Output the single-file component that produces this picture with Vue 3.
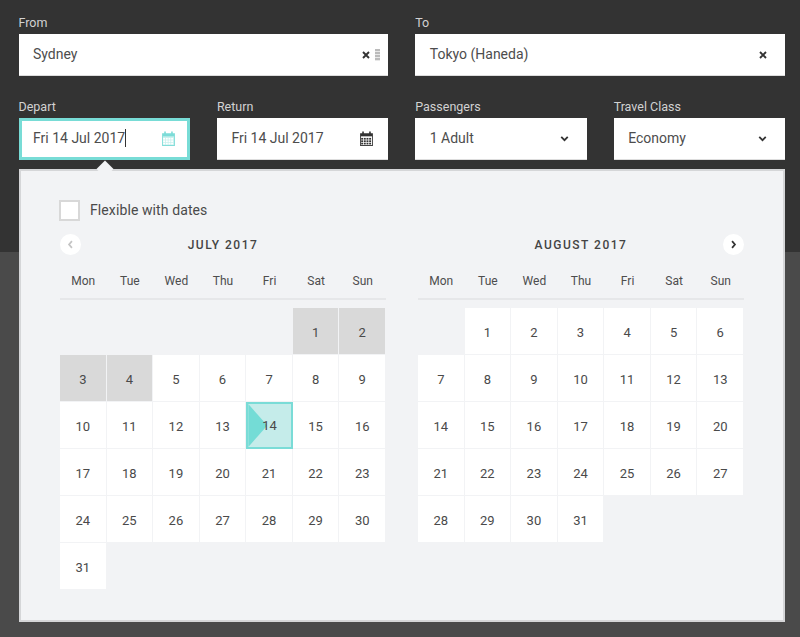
<script setup>
const weekdays = ['Mon', 'Tue', 'Wed', 'Thu', 'Fri', 'Sat', 'Sun']
const range = (n) => Array.from({ length: n }, (_, i) => i + 1)
const months = [
  { title: 'JULY 2017', blanks: 5, days: range(31), disabled: [1, 2, 3, 4], selected: 14 },
  { title: 'AUGUST 2017', blanks: 1, days: range(31), disabled: [], selected: 0 }
]
const calCells = []
for (const y of [6.5, 8.75, 11]) {
  for (const x of [2, 4.5, 7, 9.5]) calCells.push({ x, y })
}
</script>

<template>
  <div class="page">
    <header class="search">
      <div class="grid-two">
        <div class="field">
          <label>From</label>
          <div class="input grip-input">
            <span>Sydney</span>
            <svg class="x" viewBox="0 0 10 10"><path d="M2.500 2.500l5 5M7.500 2.500l-5 5" /></svg>
            <span class="grip"></span>
          </div>
        </div>
        <div class="field">
          <label>To</label>
          <div class="input">
            <span>Tokyo (Haneda)</span>
            <svg class="x x-solo" viewBox="0 0 10 10"><path d="M2.500 2.500l5 5M7.500 2.500l-5 5" /></svg>
          </div>
        </div>
      </div>
      <div class="grid-two second">
        <div class="grid-two">
          <div class="field">
            <label>Depart</label>
            <div class="input focus">
              <span>Fri 14 Jul 2017<i class="caret"></i></span>
              <svg class="cal teal" viewBox="0 0 14 15">
                <path class="fill" d="M1 2h2V.5h1.500V2h5V.5H11V2h2v12H1z" />
                <rect x="1.800" y="5" width="10.400" height="8.200" fill="#c8f0ee" />
                <rect v-for="c in calCells" :key="c.x + '-' + c.y" :x="c.x" :y="c.y" width="1.800" height="1.600" fill="#fff" />
              </svg>
            </div>
          </div>
          <div class="field">
            <label>Return</label>
            <div class="input">
              <span>Fri 14 Jul 2017</span>
              <svg class="cal" viewBox="0 0 14 15">
                <path class="fill" d="M1 2h2V.5h1.500V2h5V.5H11V2h2v12H1z" />
                <rect x="1.800" y="5" width="10.400" height="8.200" fill="#fff" />
                <rect v-for="c in calCells" :key="c.x + '-' + c.y" :x="c.x" :y="c.y" width="1.800" height="1.600" fill="#333" />
              </svg>
            </div>
          </div>
        </div>
        <div class="grid-two">
          <div class="field">
            <label>Passengers</label>
            <div class="input">
              <span>1 Adult</span>
              <svg class="chev" viewBox="0 0 10 10"><path d="M2.500 3.800L5 6.300l2.500-2.500" /></svg>
            </div>
          </div>
          <div class="field">
            <label>Travel Class</label>
            <div class="input">
              <span>Economy</span>
              <svg class="chev" viewBox="0 0 10 10"><path d="M2.500 3.800L5 6.300l2.500-2.500" /></svg>
            </div>
          </div>
        </div>
      </div>
    </header>

    <section class="popup">
      <span class="notch"></span>
      <div class="flex-row">
        <span class="checkbox"></span>
        <span>Flexible with dates</span>
      </div>
      <div class="months">
        <div v-for="(m, mi) in months" :key="m.title" class="month">
          <div class="month-head">
            <span v-if="mi === 0" class="nav">
              <svg viewBox="0 0 10 10" class="dim"><path d="M6.300 2L3.700 5l2.600 3" /></svg>
            </span>
            <span class="title">{{ m.title }}</span>
            <span v-if="mi === 1" class="nav nav-right">
              <svg viewBox="0 0 10 10"><path d="M3.700 2l2.600 3-2.600 3" /></svg>
            </span>
          </div>
          <div class="weekdays">
            <span v-for="w in weekdays" :key="w">{{ w }}</span>
          </div>
          <div class="days">
            <span v-for="b in m.blanks" :key="'b' + b" class="blank"></span>
            <span
              v-for="d in m.days"
              :key="d"
              class="day"
              :class="{ off: m.disabled.includes(d), sel: m.selected === d }"
            >{{ d }}</span>
          </div>
        </div>
      </div>
    </section>
  </div>
</template>

<style>
html, body { margin: 0; background: #4a4a4a; }
</style>

<style scoped>
.page {
  position: relative;
  width: 800px;
  height: 637px;
  overflow: hidden;
  background: #4a4a4a;
  font-family: Roboto, "Liberation Sans", sans-serif;
  color: #4a4a4a;
}
.search {
  height: 252px;
  box-sizing: border-box;
  background: #333;
  padding: 14px 15px 0 18.500px;
}
.grid-two {
  display: grid;
  grid-template-columns: 1fr 1fr;
  gap: 27px;
}
.second { margin-top: 22px; }
.field label {
  display: block;
  height: 20px;
  line-height: 17px;
  font-size: 12.500px;
  color: #d2d2d2;
}
.input {
  display: flex;
  align-items: center;
  height: 42px;
  box-sizing: border-box;
  padding: 0 14px 0 14.500px;
  background: #fff;
  font-size: 14px;
  color: #4d4d4d;
  border-bottom: 1px solid #ddd;
}
.input > span:first-child { flex: 1; white-space: nowrap; padding-bottom: 1px; }
.grip-input { padding-right: 8px; }
.focus { border: 3px solid #78dcd6; padding: 0 11px 0 11.500px; }
.input.focus > span:first-child { padding-bottom: 3px; }
.caret {
  display: inline-block;
  width: 1px;
  height: 18px;
  background: #333;
  vertical-align: -4px;
}
.x { width: 12px; height: 12px; }
.x path, .chev path, .nav path {
  fill: none;
  stroke: #333;
  stroke-width: 1.600;
}
.x-solo { margin-right: 2px; }
.grip {
  width: 5px;
  height: 12px;
  margin-left: 3px;
  background: repeating-linear-gradient(#bbb 0 2px, #e8e8e8 2px 3px);
}
.chev { width: 13px; height: 13px; margin-right: 2px; }
.chev path { stroke-width: 1.400; }
.cal { width: 15px; height: 16px; }
.fill { fill: #333; }
.teal .fill { fill: #7cdcd8; }
.popup {
  position: absolute;
  left: 19px;
  top: 169px;
  width: 766px;
  height: 453px;
  box-sizing: border-box;
  padding: 28px 39px 0;
  background: #f2f3f5;
  border: 2px solid #d5d6d8;
  font-size: 14px;
}
.notch {
  position: absolute;
  left: 78px;
  top: -8px;
  width: 12px;
  height: 12px;
  background: #f2f3f5;
  transform: rotate(45deg);
}
.flex-row {
  display: flex;
  align-items: center;
  gap: 10px;
  height: 22px;
  margin-left: -1px;
  letter-spacing: 0.1px;
}
.checkbox {
  width: 17px;
  height: 17px;
  background: #fff;
  border: 2px solid #d8d8d8;
  flex: none;
}
.months {
  display: grid;
  grid-template-columns: 326px 326px;
  justify-content: space-between;
  margin-top: 13px;
}
.month-head {
  position: relative;
  height: 21px;
  display: flex;
  align-items: center;
  justify-content: center;
}
.title {
  font-size: 12px;
  font-weight: 500;
  letter-spacing: 1.500px;
  color: #444;
}
.nav {
  position: absolute;
  left: 0;
  top: 0;
  width: 21px;
  height: 21px;
  border-radius: 50%;
  background: #fff;
  display: flex;
  align-items: center;
  justify-content: center;
}
.nav-right { left: auto; right: 0; }
.nav svg { width: 11px; height: 11px; }
.nav .dim path { stroke: #c4c4c4; }
.weekdays {
  display: grid;
  grid-template-columns: repeat(7, 1fr);
  height: 45px;
  box-sizing: border-box;
  padding-top: 18px;
  border-bottom: 2px solid #e6e7e9;
  text-align: center;
  font-size: 12px;
  line-height: 16px;
  color: #4d4d4d;
}
.days {
  display: grid;
  grid-template-columns: repeat(7, 1fr);
  grid-auto-rows: 47px;
  margin-top: 8px;
  font-size: 13px;
}
.day {
  display: flex;
  align-items: center;
  justify-content: center;
  box-sizing: border-box;
  padding-top: 2px;
  background: #fff;
  border-right: 1px solid #f2f3f5;
  border-bottom: 1px solid #f2f3f5;
  color: #4a4a4a;
}
.off { background: #d9d9d9; }
.sel {
  position: relative;
  z-index: 0;
  padding-top: 0;
  border: 2px solid #7adcd7;
  background: #c5ecea;
}
.sel::before {
  content: "";
  position: absolute;
  z-index: -1;
  left: 0;
  top: 0;
  bottom: 0;
  width: 19px;
  background: #74dcd6;
  clip-path: polygon(0 0, 100% 50%, 0 100%);
}
</style>
